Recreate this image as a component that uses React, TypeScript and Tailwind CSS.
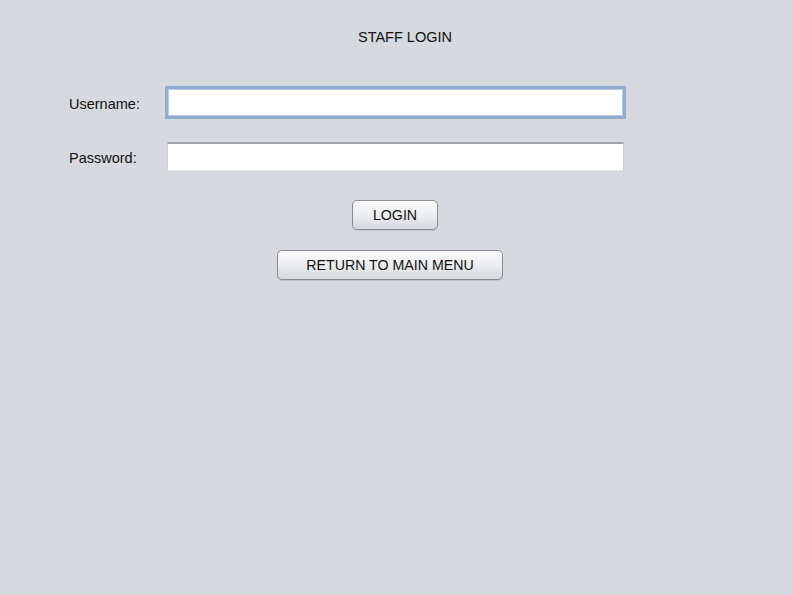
import React from "react";

const font = { fontFamily: '"Liberation Sans", Arial, sans-serif' };

function SwingButton({ label, className }: { label: string; className: string }) {
  return (
    <button
      type="button"
      className={
        "h-[30px] rounded-[5px] border border-[#878a91] bg-gradient-to-b from-[#fbfbfc] via-[#eceef1] to-[#d6d8de] pt-[2px] text-[14.2px] text-[#111] shadow-[inset_0_1px_0_#ffffff,0_1px_0_#c4c7ce] " +
        className
      }
    >
      {label}
    </button>
  );
}

export default function App() {
  return (
    <div className="min-h-[595px] w-full bg-[#d6d9e0] text-[#111]" style={font}>
      <div className="pt-[29px] pl-[358px] text-[14.5px] leading-4">STAFF LOGIN</div>

      <div className="mt-[41px] flex items-center pl-[69px]">
        <span className="w-[96px] pt-[5px] text-[14.5px]">Username:</span>
        <input
          type="text"
          className="h-[33px] w-[461px] border-[3px] border-[#93acd0] bg-white px-1 text-[14px] outline-none shadow-[inset_0_0_0_1px_#b9cae0]"
        />
      </div>

      <div className="mt-[23px] flex items-center pl-[69px]">
        <span className="w-[98px] pt-[5px] text-[14.5px]">Password:</span>
        <input
          type="password"
          className="h-[29px] w-[457px] border border-x-[#cfd0d3] border-t-2 border-t-[#a4a4a6] border-b-[#e4e5e8] bg-white px-1 text-[14px] outline-none"
        />
      </div>

      <div className="mt-[29px] pl-[352px]">
        <SwingButton label="LOGIN" className="w-[86px]" />
      </div>

      <div className="mt-[20px] pl-[277px]">
        <SwingButton label="RETURN TO MAIN MENU" className="w-[226px]" />
      </div>
    </div>
  );
}
